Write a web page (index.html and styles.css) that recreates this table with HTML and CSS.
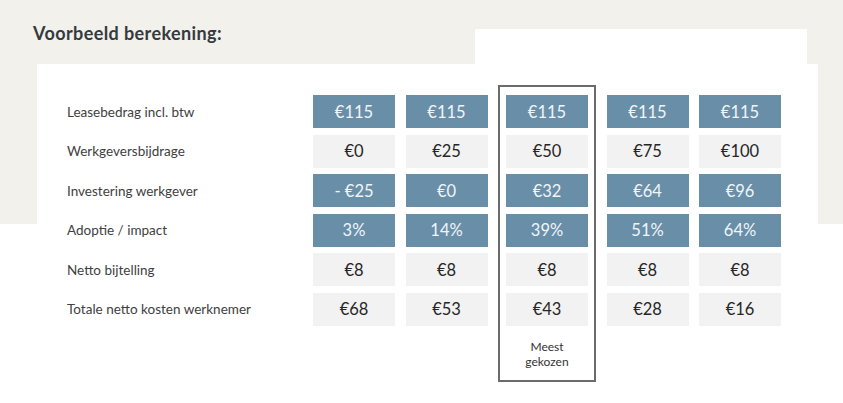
FILE: index.html
```html
<!DOCTYPE html>
<html lang="nl">
<head>
<meta charset="utf-8">
<title>Voorbeeld berekening</title>
<link rel="stylesheet" href="styles.css">
</head>
<body>
<div class="page">
  <div class="top">
    <h2 class="heading">Voorbeeld berekening:</h2>
    <div class="tab"></div>
  </div>
  <div class="card">
    <div class="labels">
      <div class="label">Leasebedrag incl. btw</div>
      <div class="label">Werkgeversbijdrage</div>
      <div class="label">Investering werkgever</div>
      <div class="label">Adoptie / impact</div>
      <div class="label">Netto bijtelling</div>
      <div class="label">Totale netto kosten werknemer</div>
    </div>
    <div class="cols">
      <div class="col">
        <div class="cell blue">€115</div>
        <div class="cell grey">€0</div>
        <div class="cell blue">- €25</div>
        <div class="cell blue">3%</div>
        <div class="cell grey">€8</div>
        <div class="cell grey">€68</div>
      </div>
      <div class="col">
        <div class="cell blue">€115</div>
        <div class="cell grey">€25</div>
        <div class="cell blue">€0</div>
        <div class="cell blue">14%</div>
        <div class="cell grey">€8</div>
        <div class="cell grey">€53</div>
      </div>
      <div class="col col-featured">
        <div class="cell blue">€115</div>
        <div class="cell grey">€50</div>
        <div class="cell blue">€32</div>
        <div class="cell blue">39%</div>
        <div class="cell grey">€8</div>
        <div class="cell grey">€43</div>
        <div class="note">Meest<br>gekozen</div>
      </div>
      <div class="col">
        <div class="cell blue">€115</div>
        <div class="cell grey">€75</div>
        <div class="cell blue">€64</div>
        <div class="cell blue">51%</div>
        <div class="cell grey">€8</div>
        <div class="cell grey">€28</div>
      </div>
      <div class="col">
        <div class="cell blue">€115</div>
        <div class="cell grey">€100</div>
        <div class="cell blue">€96</div>
        <div class="cell blue">64%</div>
        <div class="cell grey">€8</div>
        <div class="cell grey">€16</div>
      </div>
    </div>
  </div>
</div>
</body>
</html>
```
FILE: styles.css
```css
html, body {
  margin: 0;
  padding: 0;
}
body {
  width: 843px;
  height: 403px;
  overflow: hidden;
  background: linear-gradient(#f2f1ec 0, #f2f1ec 224px, #ffffff 224px);
  font-family: "Lato", "Open Sans", sans-serif;
}
.page {
  padding: 23px 0 0 33px;
}
.top {
  display: flex;
  width: 774px;
  height: 41px;
}
.heading {
  margin: 0;
  font-family: "Lato", sans-serif;
  font-weight: 700;
  font-size: 18px;
  letter-spacing: 0.4px;
  line-height: 20px;
  color: #343a3e;
}
.tab {
  margin-left: auto;
  align-self: flex-end;
  width: 332px;
  height: 35px;
  background: #ffffff;
}
.card {
  margin-left: 4px;
  width: 751px;
  height: 318px;
  padding: 21px 0 0 30px;
  background: #ffffff;
  display: flex;
  align-items: flex-start;
}
.labels {
  width: 246px;
  margin-top: 10px;
  display: flex;
  flex-direction: column;
  gap: 6.5px;
}
.label {
  height: 33px;
  display: flex;
  align-items: center;
  font-size: 13.5px;
  font-weight: 400;
  color: #404040;
}
.cols {
  display: flex;
  align-items: flex-start;
  gap: 10.5px;
}
.col {
  width: 82px;
  margin-top: 10px;
  display: flex;
  flex-direction: column;
  gap: 6.5px;
}
.col-featured {
  margin-top: 0;
  padding: 8px 6px 11px;
  border: 2px solid #6b6b6b;
}
.cell {
  height: 33px;
  display: flex;
  align-items: center;
  justify-content: center;
  font-size: 16.5px;
}
.blue {
  background: #688ea8;
  color: #f1f5f8;
}
.grey {
  background: #f2f2f2;
  color: #262626;
}
.note {
  margin-top: 7px;
  text-align: center;
  font-size: 12px;
  line-height: 15px;
  color: #333333;
}
```
